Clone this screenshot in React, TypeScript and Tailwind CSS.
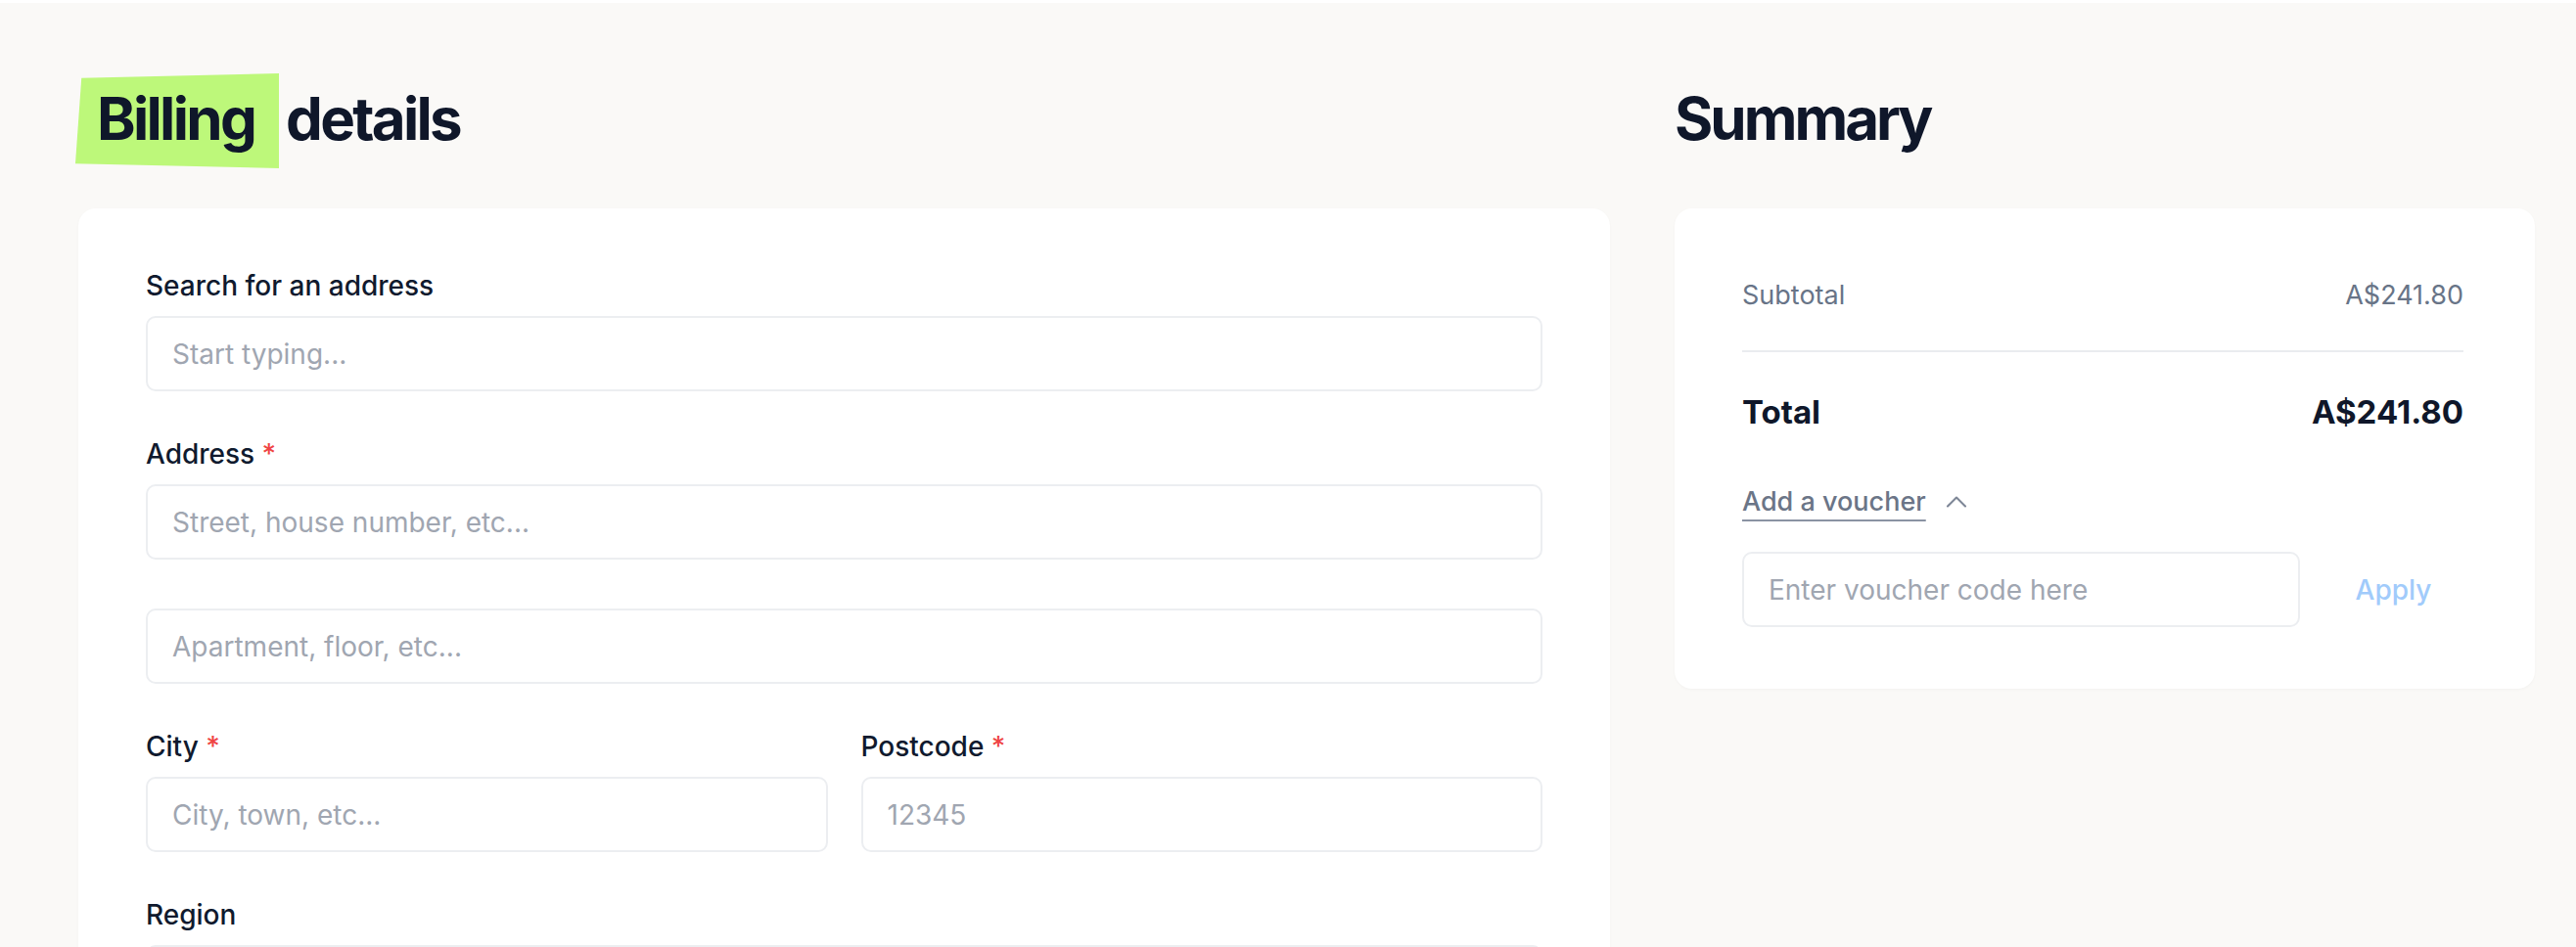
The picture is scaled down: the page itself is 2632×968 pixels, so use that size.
import React from "react";
import { ChevronUp } from "lucide-react";

type FieldProps = {
  label?: string;
  placeholder: string;
  required?: boolean;
};

const Field = ({ label, placeholder, required }: FieldProps) => {
  return (
    <div className="flex flex-col">
      {label && (
        <label className="text-[28px] leading-[42px] font-medium text-[#101a2e] mb-[10px]">
          {label}
          {required && <span className="text-[#ef4444]"> *</span>}
        </label>
      )}
      <input
        placeholder={placeholder}
        className="h-[77px] w-full rounded-[10px] border-2 border-[#eceef1] bg-white px-[25px] text-[28px] text-[#101a2e] placeholder:text-[#a0a6b1] outline-none"
      />
    </div>
  );
};

const BillingDetails = () => {
  return (
    <section className="w-[1565px] shrink-0">
      {/* heading with the lime marker behind "Billing" */}
      <h1 className="flex text-[60px] leading-[72px] font-bold tracking-[-0.045em] text-[#0f172a]">
        <span className="relative inline-block pl-[19px] pr-[25px]">
          <span
            className="absolute left-[-3px] right-0 top-[-10px] bottom-[-15px] bg-[#bdf87a]"
            style={{ clipPath: "polygon(3% 5%, 100% 0%, 100% 100%, 0% 95%)" }}
          />
          <span className="relative">Billing</span>
        </span>
        <span className="ml-[7px]">details</span>
      </h1>

      <div className="mt-[56px] rounded-[18px] bg-white px-[69px] pt-[58px] pb-[60px] shadow-[0_1px_3px_rgba(0,0,0,0.03)]">
        <div className="flex flex-col gap-[43px]">
          <Field label="Search for an address" placeholder="Start typing..." />
          <div className="flex flex-col gap-[50px]">
            <Field label="Address" required placeholder="Street, house number, etc..." />
            <Field placeholder="Apartment, floor, etc..." />
          </div>
          <div className="grid grid-cols-2 gap-[34px]">
            <Field label="City" required placeholder="City, town, etc..." />
            <Field label="Postcode" required placeholder="12345" />
          </div>
          <Field label="Region" placeholder="State, province, etc..." />
        </div>
      </div>
    </section>
  );
};

const Summary = () => {
  return (
    <aside className="w-[879px] shrink-0">
      <h2 className="text-[60px] leading-[72px] font-bold tracking-[-0.05em] text-[#0f172a]">Summary</h2>

      <div className="mt-[56px] rounded-[18px] bg-white pl-[69px] pr-[73px] pt-[69px] pb-[63px] shadow-[0_1px_3px_rgba(0,0,0,0.03)]">
        <div className="flex items-center justify-between text-[27px] leading-[40px] text-[#687487]">
          <span>Subtotal</span>
          <span>A$241.80</span>
        </div>

        <div className="mt-[36px] h-[2px] bg-[#eaecef]" />

        <div className="mt-[37px] flex items-center justify-between text-[33px] leading-[48px] font-bold text-[#0f172a]">
          <span>Total</span>
          <span>A$241.80</span>
        </div>

        <button className="mt-[49px] flex items-center gap-[13px] text-[27px] leading-[38px] font-medium text-[#6b7587]">
          <span className="underline decoration-2 underline-offset-[9px] decoration-[#8a93a3]">Add a voucher</span>
          <ChevronUp size={36} strokeWidth={1.4} className="text-[#7d8696]" />
        </button>

        <div className="mt-[32px] flex items-center gap-[24px]">
          <input
            placeholder="Enter voucher code here"
            className="h-[77px] w-[570px] rounded-[10px] border-2 border-[#eceef1] bg-white px-[25px] text-[28px] placeholder:text-[#a0a6b1] outline-none"
          />
          <button className="flex-1 text-center text-[28px] font-medium text-[#a1cbfb]">Apply</button>
        </div>
      </div>
    </aside>
  );
};

export default function App() {
  return (
    <div className="min-h-screen bg-[#faf9f7] font-['Inter',sans-serif]">
      <div className="h-[3px] bg-white" />
      <div className="flex items-start gap-[66px] pl-[80px] pt-[82px]">
        <BillingDetails />
        <Summary />
      </div>
    </div>
  );
}
